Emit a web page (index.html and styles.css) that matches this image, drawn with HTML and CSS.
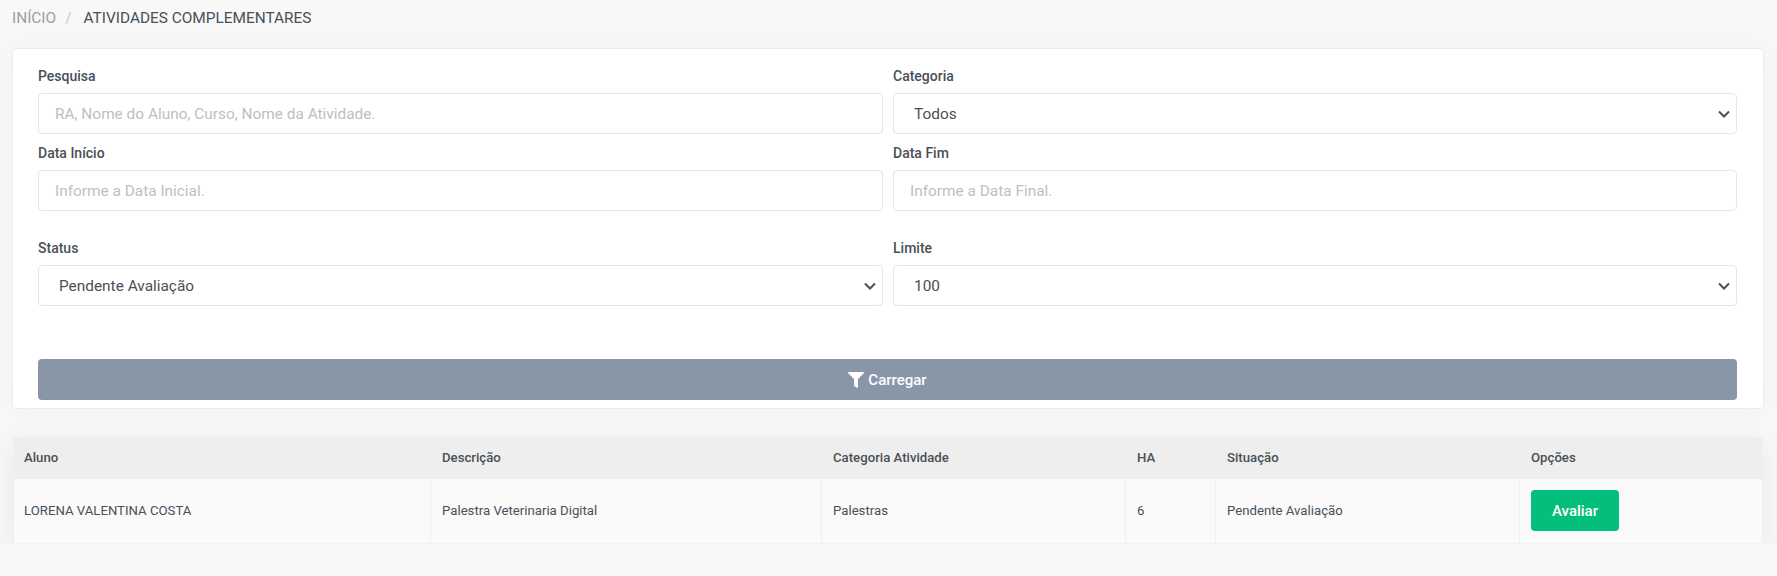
FILE: index.html
```html
<!DOCTYPE html>
<html lang="pt-BR">
<head>
    <meta charset="UTF-8">
    <meta name="viewport" content="width=device-width, initial-scale=1.0">
    <title>Atividades Complementares</title>
    <link rel="stylesheet" href="styles.css">
</head>
<body>
    <nav class="breadcrumb">
        <a href="#">Início</a>
        <span class="sep">/</span>
        <span class="active">Atividades Complementares</span>
    </nav>

    <div class="card">
        <div class="filter-grid">
            <div class="field">
                <label for="pesquisa">Pesquisa</label>
                <input type="text" id="pesquisa" placeholder="RA, Nome do Aluno, Curso, Nome da Atividade.">
            </div>
            <div class="field">
                <label for="categoria">Categoria</label>
                <select id="categoria">
                    <option>Todos</option>
                </select>
            </div>
            <div class="field">
                <label for="inicio">Data Início</label>
                <input type="text" id="inicio" placeholder="Informe a Data Inicial.">
            </div>
            <div class="field">
                <label for="fim">Data Fim</label>
                <input type="text" id="fim" placeholder="Informe a Data Final.">
            </div>
            <div class="field field-low">
                <label for="status">Status</label>
                <select id="status">
                    <option>Pendente Avaliação</option>
                </select>
            </div>
            <div class="field field-low">
                <label for="limite">Limite</label>
                <select id="limite">
                    <option>100</option>
                </select>
            </div>
        </div>
        <button class="btn-load">
            <svg class="icon" viewBox="0 0 512 512"><path fill="currentColor" d="M487.976 0H24.028C2.71 0-8.047 25.866 7.058 40.971L192 225.941V432c0 7.831 3.821 15.17 10.237 19.662l80 55.98C298.02 518.69 320 507.493 320 487.98V225.941l184.947-184.97C520.021 25.896 509.338 0 487.976 0z"/></svg>
            Carregar
        </button>
    </div>

    <table class="results">
        <colgroup>
            <col class="col-aluno">
            <col class="col-desc">
            <col class="col-cat">
            <col class="col-ha">
            <col class="col-sit">
            <col>
        </colgroup>
        <thead>
            <tr>
                <th>Aluno</th>
                <th>Descrição</th>
                <th>Categoria Atividade</th>
                <th>HA</th>
                <th>Situação</th>
                <th>Opções</th>
            </tr>
        </thead>
        <tbody>
            <tr>
                <td>LORENA VALENTINA COSTA</td>
                <td>Palestra Veterinaria Digital</td>
                <td>Palestras</td>
                <td>6</td>
                <td>Pendente Avaliação</td>
                <td><button class="btn-rate">Avaliar</button></td>
            </tr>
        </tbody>
    </table>
</body>
</html>
```

FILE: styles.css
```css
* {
    box-sizing: border-box;
}
body {
    font-family: Roboto, sans-serif;
    margin: 0;
    padding: 0 13px 0 12px;
    background-color: #f8f8f8;
    color: #495057;
    font-size: 13.2px;
}
.breadcrumb {
    display: flex;
    align-items: center;
    height: 36px;
    font-size: 15.4px;
    text-transform: uppercase;
}
.breadcrumb a {
    color: #9aa0a6;
    text-decoration: none;
}
.breadcrumb .sep {
    color: #c4c8cc;
    margin: 0 9px;
}
.breadcrumb .active {
    color: #495057;
    margin-left: 3px;
}
.card {
    margin-top: 12px;
    height: 361px;
    padding: 17px 26px 0 25px;
    background: #fff;
    border: 1px solid #ececec;
    border-radius: 4px;
    box-shadow: 0 0 30px rgba(0,0,0,0.03);
}
.filter-grid {
    display: grid;
    grid-template-columns: 845px 1fr;
    column-gap: 10px;
}
.field {
    display: flex;
    flex-direction: column;
    margin-bottom: 9px;
    height: 68px;
}
.field-low {
    margin-top: 18px;
}
label {
    display: block;
    font-size: 14px;
    font-weight: 500;
    line-height: 20px;
    height: 27px;
    color: #495057;
}
input, select {
    width: 100%;
    height: 41px;
    flex: none;
    padding: 0 16px;
    font-family: Roboto, sans-serif;
    font-size: 15.4px;
    color: #495057;
    background-color: #fff;
    border: 1px solid #e3e5e7;
    border-radius: 4px;
}
select {
    appearance: none;
    padding-left: 20px;
    background-image: url("data:image/svg+xml,%3Csvg xmlns='http://www.w3.org/2000/svg' viewBox='0 0 12 8'%3E%3Cpath fill='none' stroke='%23495057' stroke-width='2' d='M1 1.5l5 5 5-5'/%3E%3C/svg%3E");
    background-repeat: no-repeat;
    background-position: right 6px center;
    background-size: 12px 8px;
}
input::placeholder {
    color: #bdbfc1;
    opacity: 1;
}
.btn-load {
    display: flex;
    align-items: center;
    justify-content: center;
    gap: 4px;
    width: 100%;
    height: 41px;
    margin-top: 44px;
    font-family: Roboto, sans-serif;
    font-size: 15px;
    font-weight: 500;
    color: #fff;
    background-color: #8896a8;
    border: none;
    border-radius: 4px;
}
.icon {
    width: 16px;
    height: 16px;
}
.results {
    width: calc(100% - 3px);
    margin: 28px 2px 0 1px;
    border-collapse: collapse;
    table-layout: fixed;
    box-shadow: 0 6px 30px rgba(0,0,0,0.07);
}
.col-aluno { width: 417px; }
.col-desc { width: 391px; }
.col-cat { width: 304px; }
.col-ha { width: 90px; }
.col-sit { width: 304px; }
.results th, .results td {
    padding: 0 11px;
    text-align: left;
    font-size: 13.2px;
}
.results th:first-child, .results td:first-child {
    padding-left: 10px;
}
.results th {
    height: 42px;
    padding-bottom: 2px;
    font-weight: 500;
    background-color: #eeeeee;
    border-left: 1px solid #f0f0f0;
}
.results td {
    height: 64px;
    background-color: #fafafa;
    border-left: 1px solid #f0f0f0;
    border-bottom: 1px solid #f2f2f2;
}
.btn-rate {
    display: block;
    width: 88px;
    height: 41px;
    font-family: Roboto, sans-serif;
    font-size: 15px;
    font-weight: 500;
    color: #fff;
    background-color: #04bf7b;
    border: none;
    border-radius: 4px;
}
```
